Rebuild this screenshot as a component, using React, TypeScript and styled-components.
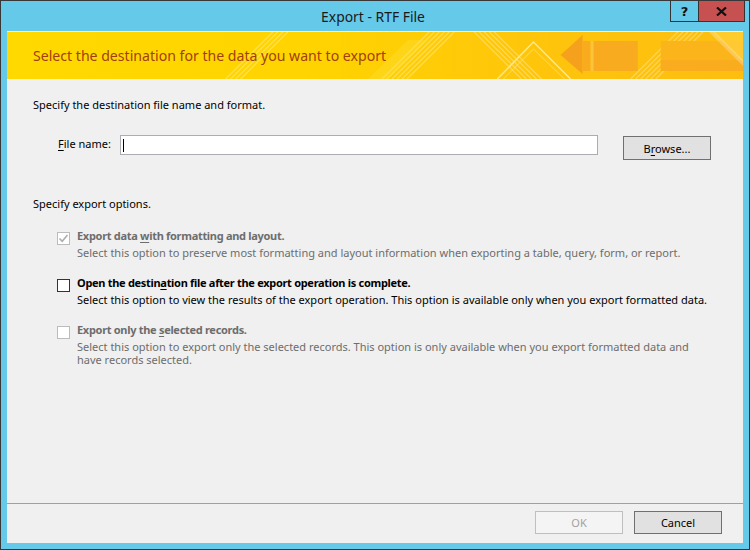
import styled, { createGlobalStyle } from "styled-components";

const GlobalStyle = createGlobalStyle`
	html, body {
		margin: 0;
		padding: 0;
		background: #ffffff;
	}
	* {
		box-sizing: border-box;
	}
`;

const font = `"Noto Sans", "Open Sans", sans-serif`;

const Window = styled.div`
	width: 750px;
	height: 550px;
	display: flex;
	flex-direction: column;
	background: #65c9ea;
	border: 1px solid #383838;
	font-family: ${font};
	font-size: 11px;
	color: #000;
`;

const TitleBar = styled.div`
	height: 30px;
	flex: none;
	display: grid;
	grid-template-columns: 1fr auto 1fr;
	padding-right: 4px;
`;

const Title = styled.div`
	grid-column: 2;
	align-self: center;
	font-size: 13.9px;
	color: #1a1a1a;
	padding-top: 1px;
`;

const Controls = styled.div`
	grid-column: 3;
	justify-self: end;
	align-self: start;
	display: flex;
`;

const CaptionButton = styled.div<{ $close?: boolean }>`
	height: 21px;
	width: ${(p) => (p.$close ? "46px" : "29px")};
	display: flex;
	align-items: center;
	justify-content: center;
	background: ${(p) => (p.$close ? "#c75050" : "#65c9ea")};
	border: 1px solid #333;
	border-top: none;
	border-left: ${(p) => (p.$close ? "none" : "1px solid #333")};
	font-size: 13px;
	font-weight: 700;
	font-family: "DejaVu Sans", sans-serif;
	color: #111;
`;

const Client = styled.div`
	flex: 1;
	margin: 0 6px 6px 6px;
	display: flex;
	flex-direction: column;
	background: #f0f0f0;
	padding-top: 1px;
`;

const Banner = styled.div`
	position: relative;
	height: 47px;
	flex: none;
	display: flex;
	align-items: center;
	padding-left: 26px;
	background: linear-gradient(90deg, #ffd900 0%, #ffd400 40%, #fec40c 75%, #fdbe10 100%);
	overflow: hidden;
`;

const BannerArt = styled.svg`
	position: absolute;
	inset: 0;
	width: 100%;
	height: 100%;
`;

const BannerText = styled.div`
	position: relative;
	font-size: 14.1px;
	color: #a0410d;
`;

const Body = styled.div`
	flex: 1;
	padding: 18px 26px 0;
	display: flex;
	flex-direction: column;
`;

const Heading = styled.div<{ $gap?: number }>`
	line-height: 16px;
	margin-top: ${(p) => p.$gap ?? 0}px;
`;

const FileRow = styled.div`
	display: flex;
	align-items: flex-start;
	margin: 22px 0 0 25px;
`;

const FieldLabel = styled.label`
	width: 62px;
	line-height: 18px;
`;

const TextBox = styled.div`
	width: 478px;
	height: 20px;
	background: #fff;
	border: 1px solid #abadb3;
	display: flex;
	align-items: center;
	padding-left: 2px;
`;

const Caret = styled.span`
	width: 1px;
	height: 13px;
	background: #000;
`;

const Button = styled.button<{ $disabled?: boolean }>`
	width: 88px;
	height: 23px;
	padding: 0;
	font-family: ${font};
	font-size: 11px;
	color: ${(p) => (p.$disabled ? "#a2a2a2" : "#000")};
	background: ${(p) => (p.$disabled ? "#f4f4f4" : "#e1e1e1")};
	border: 1px solid ${(p) => (p.$disabled ? "#bfbfbf" : "#707070")};
	border-radius: 0;
`;

const BrowseButton = styled(Button)`
	margin: 1px 0 0 25px;
	height: 24px;
`;

const Key = styled.span`
	text-decoration: underline;
	text-underline-offset: 2px;
`;

const Options = styled.div`
	margin: 16px 0 0 24px;
	display: flex;
	flex-direction: column;
	gap: 16px;
`;

const Option = styled.div<{ $disabled?: boolean }>`
	display: grid;
	grid-template-columns: 13px 1fr;
	column-gap: 7px;
	color: ${(p) => (p.$disabled ? "#6d6d6d" : "#000")};
`;

const Box = styled.span<{ $disabled?: boolean }>`
	width: 13px;
	height: 13px;
	margin: 4px 0 -1px;
	background: #fff;
	border: 1px solid ${(p) => (p.$disabled ? "#bcbcbc" : "#333")};
	display: flex;
	align-items: center;
	justify-content: center;
`;

const OptionLabel = styled.div`
	font-weight: 700;
	line-height: 16px;
	letter-spacing: -0.3px;
`;

const OptionHint = styled.div`
	grid-column: 2;
	line-height: 13px;
	margin-top: 2px;
`;

const Footer = styled.div`
	flex: none;
	display: flex;
	justify-content: flex-end;
	gap: 11px;
	border-top: 1px solid #a0a0a0;
	padding: 7px 21px 9px;
`;

function CheckBox({ checked, disabled }: { checked?: boolean; disabled?: boolean }) {
	return (
		<Box $disabled={disabled}>
			{checked && (
				<svg width="11" height="11" viewBox="0 0 11 11">
					<path d="M1.5 5.5 L4.2 8.2 L9.5 2" fill="none" stroke="#adadad" strokeWidth="1.6" />
				</svg>
			)}
		</Box>
	);
}

// stripes, arrow and blocks behind the banner heading
function BannerDecor() {
	const stripes = (x0: number, n: number, dx: number, up = true) =>
		[...Array(n)].map((_, i) => {
			const x = x0 + i * dx;
			return up ? (
				<line key={i} x1={x} y1={47} x2={x + 47} y2={0} />
			) : (
				<line key={i} x1={x} y1={0} x2={x + 47} y2={47} />
			);
		});
	return (
		<BannerArt viewBox="0 0 734 47" preserveAspectRatio="none">
			<g stroke="#fff" strokeOpacity="0.3" strokeWidth="1.3">
				{stripes(218, 4, 5)}
				{stripes(374, 6, 5)}
				{stripes(466, 5, 5, false)}
				{stripes(622, 6, 5)}
			</g>
			<polygon points="360,47 400,8 420,8 380,47" fill="#ffe23a" opacity="0.35" />
			<polyline points="489,47 525,10 562,47" fill="none" stroke="#ffe88a" strokeWidth="1.5" />
			<polyline points="495,47 525,17 556,47" fill="none" stroke="#fff" strokeOpacity="0.3" />
			<polygon points="552,23 574,3 574,42" fill="#f6a11e" />
			<rect x="574" y="9" width="8" height="30" fill="#f8ab1e" />
			<rect x="582" y="9" width="3" height="30" fill="#fcc43a" />
			<rect x="585" y="9" width="44" height="30" fill="#f9ab1f" />
			<rect x="652" y="9" width="82" height="30" fill="#fbb51b" />
			<rect x="652" y="28" width="82" height="11" fill="#f9ac1e" />
			<polygon points="704,0 734,0 734,30" fill="#ffd23c" opacity="0.7" />
			<polygon points="700,0 706,0 734,28 734,34" fill="#fff" opacity="0.25" />
		</BannerArt>
	);
}

export default function App() {
	return (
		<>
			<GlobalStyle />
			<Window>
				<TitleBar>
					<Title>Export - RTF File</Title>
					<Controls>
						<CaptionButton>?</CaptionButton>
						<CaptionButton $close>
							<svg width="11" height="9" viewBox="0 0 11 9">
								<path d="M1 0.5 L10 8.5 M10 0.5 L1 8.5" stroke="#111" strokeWidth="2.2" />
							</svg>
						</CaptionButton>
					</Controls>
				</TitleBar>
				<Client>
					<Banner>
						<BannerDecor />
						<BannerText>Select the destination for the data you want to export</BannerText>
					</Banner>
					<Body>
						<Heading>Specify the destination file name and format.</Heading>
						<FileRow>
							<FieldLabel>
								<Key>F</Key>ile name:
							</FieldLabel>
							<TextBox>
								<Caret />
							</TextBox>
							<BrowseButton>
								B<Key>r</Key>owse...
							</BrowseButton>
						</FileRow>
						<Heading $gap={36}>Specify export options.</Heading>
						<Options>
							<Option $disabled>
								<CheckBox checked disabled />
								<OptionLabel>
									Export data <Key>w</Key>ith formatting and layout.
								</OptionLabel>
								<OptionHint>
									Select this option to preserve most formatting and layout information when exporting a table, query, form, or report.
								</OptionHint>
							</Option>
							<Option>
								<CheckBox />
								<OptionLabel>
									Open the destin<Key>a</Key>tion file after the export operation is complete.
								</OptionLabel>
								<OptionHint>
									Select this option to view the results of the export operation. This option is available only when you export formatted data.
								</OptionHint>
							</Option>
							<Option $disabled>
								<CheckBox disabled />
								<OptionLabel>
									Export only the <Key>s</Key>elected records.
								</OptionLabel>
								<OptionHint>
									Select this option to export only the selected records. This option is only available when you export formatted data and
									<br />
									have records selected.
								</OptionHint>
							</Option>
						</Options>
					</Body>
					<Footer>
						<Button $disabled>OK</Button>
						<Button>Cancel</Button>
					</Footer>
				</Client>
			</Window>
		</>
	);
}
